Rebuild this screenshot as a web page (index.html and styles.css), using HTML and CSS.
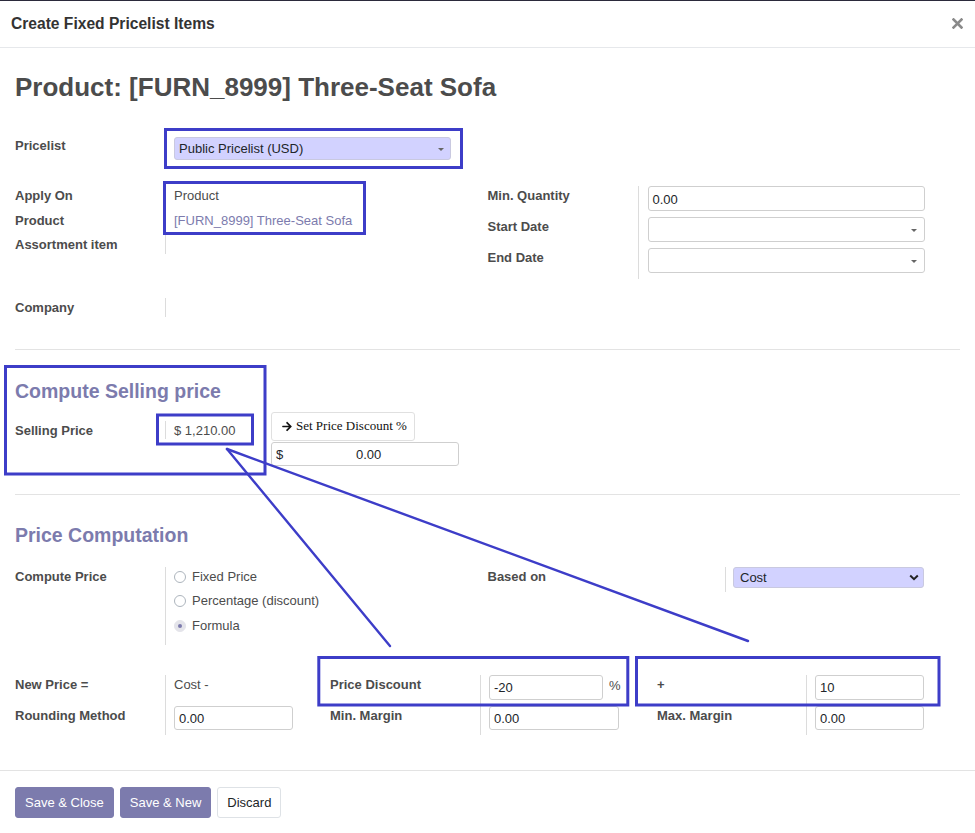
FILE: index.html
```html
<!DOCTYPE html>
<html lang="en">
<head>
<meta charset="utf-8">
<title>Create Fixed Pricelist Items</title>
<link rel="stylesheet" href="styles.css">
</head>
<body>
<div class="modal">
  <header class="modal-header">
    <h4 class="modal-title">Create Fixed Pricelist Items</h4>
    <button class="close" aria-label="Close">
      <svg width="11" height="11" viewBox="0 0 11 11"><path d="M1.5 1.5L9.5 9.5M9.5 1.5L1.5 9.5" stroke="#8a8a8a" stroke-width="2.6" stroke-linecap="square"/></svg>
    </button>
  </header>

  <main class="modal-body">
    <h1 class="product-title">Product: [FURN_8999] Three-Seat Sofa</h1>

    <div class="pricelist-row">
      <div class="lbl pl-lbl">Pricelist</div>
      <div class="val">
        <div class="select lav">Public Pricelist (USD)<span class="caret"></span></div>
      </div>
    </div>

    <div class="group-pair">
      <div class="group">
        <div class="row"><div class="lbl">Apply On</div><div class="val">Product</div></div>
        <div class="row"><div class="lbl">Product</div><div class="val link">[FURN_8999] Three-Seat Sofa</div></div>
        <div class="row"><div class="lbl">Assortment item</div><div class="val"></div></div>
        <div class="row company"><div class="lbl">Company</div><div class="val"></div></div>
      </div>
      <div class="group">
        <div class="rrow"><div class="lbl">Min. Quantity</div><div class="val"><div class="input">0.00</div></div></div>
        <div class="rrow"><div class="lbl">Start Date</div><div class="val"><div class="input"><span></span><span class="caret"></span></div></div></div>
        <div class="rrow"><div class="lbl">End Date</div><div class="val"><div class="input"><span></span><span class="caret"></span></div></div></div>
      </div>
    </div>

    <hr class="sep sep1">

    <h2 class="section-title">Compute Selling price</h2>
    <div class="sell-row">
      <div class="lbl sell-lbl">Selling Price</div>
      <div class="val sell-val">$ 1,210.00</div>
      <div class="sell-stack">
        <button class="btn-discount">
          <svg width="10" height="11" viewBox="0 0 448 512"><path d="M190.5 66.9l22.2-22.2c9.4-9.4 24.6-9.4 33.9 0L441 239c9.4 9.4 9.4 24.6 0 33.9L246.6 467.3c-9.4 9.4-24.6 9.4-33.9 0l-22.2-22.2c-9.5-9.5-9.3-25 .4-34.3L311.4 296H24c-13.3 0-24-10.7-24-24v-32c0-13.3 10.7-24 24-24h287.4L190.9 101.2c-9.8-9.3-10-24.8-.4-34.3z" fill="#111"/></svg>
          <span>Set Price Discount %</span>
        </button>
        <div class="monetary"><span>$</span><span class="amount">0.00</span></div>
      </div>
    </div>

    <hr class="sep sep2">

    <h2 class="section-title comp-title">Price Computation</h2>
    <div class="compute-pair">
      <div class="compute-left">
        <div class="lbl">Compute Price</div>
        <div class="val radios">
          <div class="radio-row"><span class="radio"></span>Fixed Price</div>
          <div class="radio-row"><span class="radio"></span>Percentage (discount)</div>
          <div class="radio-row"><span class="radio checked"></span>Formula</div>
        </div>
      </div>
      <div class="compute-right">
        <div class="lbl">Based on</div>
        <div class="val based-val">
          <div class="select lav cost">Cost
            <svg width="10" height="7" viewBox="0 0 10 7"><path d="M1.2 1.5L5 5.2L8.8 1.5" fill="none" stroke="#222" stroke-width="2"/></svg>
          </div>
        </div>
      </div>
    </div>

    <div class="formula">
      <div class="lbl">New Price =</div>
      <div class="val r1">Cost -</div>
      <div class="lbl">Price Discount</div>
      <div class="val r1 pct"><div class="input w114">-20</div><span class="pct-sign">%</span></div>
      <div class="lbl">+</div>
      <div class="val r1"><div class="input w109">10</div></div>

      <div class="lbl">Rounding Method</div>
      <div class="val r2"><div class="input h24 w119">0.00</div></div>
      <div class="lbl">Min. Margin</div>
      <div class="val r2"><div class="input h24 w130">0.00</div></div>
      <div class="lbl">Max. Margin</div>
      <div class="val r2"><div class="input h24 w109">0.00</div></div>
    </div>
  </main>

  <footer class="modal-footer">
    <button class="btn primary">Save &amp; Close</button>
    <button class="btn primary">Save &amp; New</button>
    <button class="btn secondary">Discard</button>
  </footer>

  <svg class="annot" width="975" height="833" viewBox="0 0 975 833">
    <g fill="none" stroke="#3d3dc8" stroke-width="3">
      <rect x="165.5" y="129.5" width="296" height="38"/>
      <rect x="164.5" y="182.5" width="200" height="51"/>
      <rect x="5.5" y="366.5" width="259.5" height="107.5"/>
      <rect x="157.5" y="415" width="95" height="29"/>
      <rect x="318.8" y="657.5" width="309" height="47.5"/>
      <rect x="636.5" y="657.5" width="302.5" height="47.5"/>
    </g>
    <g stroke="#3d3dc8" stroke-width="2.4" stroke-linecap="round">
      <line x1="227" y1="449" x2="390" y2="646"/>
      <line x1="227" y1="449" x2="748" y2="641"/>
    </g>
  </svg>
</div>
</body>
</html>
```

FILE: styles.css
```css
* { box-sizing: border-box; }

html, body {
  margin: 0;
  padding: 0;
  background: #ffffff;
}

body {
  font-family: "Liberation Sans", Arial, sans-serif;
  font-size: 13px;
  color: #4c4c4c;
}

.modal {
  position: relative;
  width: 975px;
  min-height: 833px;
  border-top: 1px solid #2b2a3b;
  background: #ffffff;
}

/* header */
.modal-header {
  height: 47px;
  border-bottom: 1px solid #e6e8eb;
  display: flex;
  align-items: center;
  justify-content: space-between;
  padding: 0 11px 0 11px;
}

.modal-title {
  margin: 0;
  font-size: 15.6px;
  font-weight: bold;
  color: #333333;
  line-height: 20px;
}

.close {
  border: 0;
  background: none;
  padding: 0;
  width: 11px;
  height: 11px;
  display: flex;
  margin-right: 1px;
  margin-top: -2px;
}

/* body */
.modal-body {
  padding: 0 15px 35px 15px;
}

.product-title {
  margin: 24px 0 0 0;
  font-size: 26px;
  line-height: 31px;
  font-weight: bold;
  color: #4c4c4c;
}

.lbl {
  font-weight: bold;
  line-height: 19px;
  color: #4c4c4c;
}

.val {
  border-left: 1px solid #dcdcdc;
  padding-left: 8px;
  line-height: 19px;
}

.link { color: #7c7bad; }

.pricelist-row {
  margin-top: 30px;
  width: 472.5px;
  display: grid;
  grid-template-columns: 150px 1fr;
}

.pl-lbl { padding-top: 3px; }

.pricelist-row .val { padding-top: 4px; }

.select {
  height: 23px;
  border: 1px solid #c9c9e0;
  border-radius: 3px;
  display: flex;
  align-items: center;
  justify-content: space-between;
  padding: 0 6px 0 4px;
  color: #212529;
}

.lav { background: #d2d2ff; }

.pricelist-row .select { width: 277px; }

.caret {
  width: 0;
  height: 0;
  border-left: 3.5px solid transparent;
  border-right: 3.5px solid transparent;
  border-top: 3.5px solid #666666;
  margin-top: 2px;
}

.group-pair {
  margin-top: 26px;
  display: grid;
  grid-template-columns: 472.5px 1fr;
}

.group {
  display: flex;
  flex-direction: column;
}

.row {
  display: grid;
  grid-template-columns: 150px 1fr;
  margin-bottom: 5.5px;
  min-height: 19px;
}

.row .val { min-height: 19px; }

.row.company { margin-top: 38.5px; margin-bottom: 0; }

.rrow {
  display: grid;
  grid-template-columns: 150px 1fr;
}

.rrow .val {
  padding: 0 0 6px 9px;
}

.input {
  height: 25px;
  width: 277px;
  border: 1px solid #cfcfcf;
  border-radius: 3px;
  display: flex;
  align-items: center;
  justify-content: space-between;
  padding: 1px 7px 0 4px;
  color: #212529;
  line-height: 19px;
  background: #ffffff;
}

.input .caret { margin-top: 1px; }

.h24 { height: 24px; }
.w109 { width: 109px; }
.w114 { width: 114px; }
.w119 { width: 119px; }
.w130 { width: 130px; }

.sep {
  border: 0;
  border-top: 1px solid #e3e3e3;
  margin: 0;
}

.sep1 { margin-top: 32px; }
.sep2 { margin-top: 28px; }

.section-title {
  margin: 29.5px 0 0 0;
  font-size: 19.5px;
  line-height: 23.4px;
  font-weight: bold;
  color: #7c7bad;
}

/* selling price */
.sell-row {
  margin-top: 9px;
  display: flex;
  align-items: flex-start;
}

.sell-lbl {
  width: 150px;
  padding-top: 9px;
}

.sell-val {
  width: 106px;
  margin-top: 9.5px;
  line-height: 17px;
  padding-top: 0.5px;
  color: #4c4c4c;
}

.sell-stack {
  display: flex;
  flex-direction: column;
  align-items: flex-start;
}

.btn-discount {
  height: 29px;
  width: 144px;
  border: 1px solid #e0e0e0;
  border-radius: 3px;
  background: #ffffff;
  padding: 0 0 0 10px;
  display: flex;
  align-items: center;
  gap: 4px;
  font-family: "Liberation Serif", "Times New Roman", serif;
  font-size: 13px;
  font-weight: normal;
  color: #111111;
}

.monetary {
  margin-top: 1px;
  width: 188px;
  height: 24px;
  border: 1px solid #cfcfcf;
  border-radius: 3px;
  display: flex;
  align-items: center;
  padding: 1px 0 0 4px;
  color: #212529;
}

.amount {
  width: 98px;
  text-align: right;
}

/* price computation */
.compute-pair {
  margin-top: 19px;
  display: grid;
  grid-template-columns: 472.5px 1fr;
}

.compute-left {
  display: grid;
  grid-template-columns: 150px 1fr;
}

.radios { padding-bottom: 5px; }

.radio-row {
  height: 19px;
  margin-bottom: 5.4px;
  display: flex;
  align-items: center;
  gap: 6px;
  color: #4c4c4c;
}

.radio {
  width: 12px;
  height: 12px;
  border-radius: 50%;
  border: 1px solid #adb5bd;
  background: #ffffff;
  display: flex;
  align-items: center;
  justify-content: center;
  margin-top: 1px;
}

.radio.checked {
  border-color: #e4e4ea;
  background: #e4e4ea;
}

.radio.checked::after {
  content: "";
  width: 4px;
  height: 4px;
  border-radius: 50%;
  background: #7c7bad;
}

.compute-right {
  display: grid;
  grid-template-columns: 237.5px 1fr;
  align-self: start;
  align-items: start;
}

.based-val {
  padding: 0 0 4px 7px;
}

.select.cost {
  width: 191px;
  height: 21px;
  padding: 0 4px 0 6px;
  border-color: #c9c9e0;
}

/* formula grid */
.formula {
  margin-top: 30px;
  display: grid;
  grid-template-columns: 150px 165px 150px 177px 149px 1fr;
}

.formula .r1 { padding-bottom: 6px; }
.formula .r2 { padding-bottom: 5px; }

.pct {
  display: flex;
  align-items: center;
  align-self: stretch;
}

.pct .input { flex: none; }

.pct-sign {
  margin-left: 6px;
  margin-top: -3px;
  color: #4c4c4c;
}

/* footer */
.modal-footer {
  border-top: 1px solid #e3e3e3;
  padding: 16px 15px;
  display: flex;
  gap: 6px;
}

.btn {
  height: 31px;
  padding: 0 9px;
  border-radius: 3px;
  font-family: "Liberation Sans", Arial, sans-serif;
  font-size: 13px;
  display: flex;
  align-items: center;
}

.btn.primary {
  background: #7c7bad;
  border: 1px solid #7c7bad;
  color: #ffffff;
}

.btn.secondary {
  background: #ffffff;
  border: 1px solid #dee2e6;
  color: #212529;
}

/* annotation overlay */
.annot {
  position: absolute;
  left: 0;
  top: -1px;
  pointer-events: none;
}
```
